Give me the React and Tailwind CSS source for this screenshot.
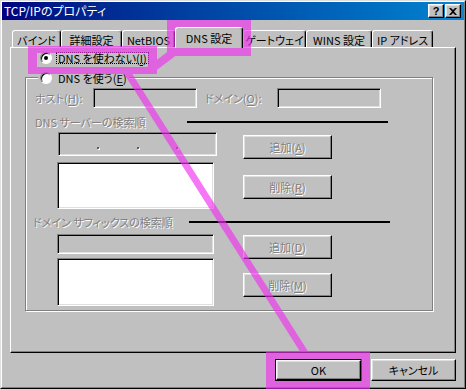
import React from 'react'

const sunken = 'border border-t-[#808080] border-l-[#808080] border-b-white border-r-white shadow-[inset_1px_1px_0_#000,inset_-1px_-1px_0_#dfdfdf]'
const raised = 'border border-t-white border-l-white border-b-black border-r-black shadow-[inset_-1px_-1px_0_#808080,inset_1px_1px_0_#dfdfdf]'
const dis = 'text-[#808080] [text-shadow:1px_1px_0_#fff]'

function U({ children }) {
  return <span className="underline underline-offset-[2px]">{children}</span>
}

function Radio({ checked }) {
  return (
    <span className="flex items-center justify-center w-[12px] h-[12px] shrink-0 rounded-full bg-white border border-t-[#808080] border-l-[#808080] border-b-white border-r-white shadow-[inset_1px_1px_0_#000]">
      {checked && <span className="w-[4px] h-[4px] rounded-full bg-black" />}
    </span>
  )
}

function Tab({ label, w, active }) {
  if (active) {
    return (
      <div className={`relative z-10 ${w} h-[21px] flex justify-center pt-[4px] leading-[12px] whitespace-nowrap bg-[#c0c0c0] border-l border-t border-r border-l-white border-t-white border-r-black rounded-t-[3px] shadow-[inset_-1px_0_0_#808080]`}>
        {label}
      </div>
    )
  }
  return (
    <div className={`${w} h-[17px] mt-[3px] flex justify-center pt-[3px] leading-[12px] whitespace-nowrap border-l border-t border-r border-l-white border-t-white border-r-black rounded-t-[3px] shadow-[inset_-1px_0_0_#808080]`}>
      {label}
    </div>
  )
}

function Btn({ children, className = '' }) {
  return (
    <div className={`w-[89px] h-[24px] flex items-center justify-center ${raised} ${dis} ${className}`}>
      {children}
    </div>
  )
}

function IpDot() {
  return (
    <div className="w-[3px] self-stretch flex justify-center items-end pb-[6px]">
      <div className="w-[2px] h-[2px] bg-[#606060] shadow-[1px_1px_0_#fff]" />
    </div>
  )
}

export default function App() {
  return (
    <div className="relative w-[466px] h-[389px] overflow-hidden bg-[#c0c0c0] text-[11px] text-black font-['Noto_Sans_CJK_JP',sans-serif] [font-feature-settings:'palt']">
      <div className="h-full border border-t-[#dfdfdf] border-l-[#dfdfdf] border-b-black border-r-black">
        <div className="h-full flex flex-col border border-t-white border-l-white border-b-[#808080] border-r-[#808080]">
          {/* title bar */}
          <div className="h-[18px] flex items-center justify-between pl-[2px] pr-[3px] bg-linear-to-r from-[#000080] to-[#1084d0]">
            <span className="text-white text-[12px] leading-none">TCP/IPのプロパティ</span>
            <div className="flex gap-[1px]">
              <div className={`w-[16px] h-[14px] flex items-center justify-center bg-[#c0c0c0] ${raised} font-bold text-[11px] leading-none font-['Liberation_Sans',sans-serif]`}>?</div>
              <div className={`w-[16px] h-[14px] flex items-center justify-center bg-[#c0c0c0] ${raised}`}>
                <svg width="8" height="7" viewBox="0 0 8 7">
                  <path d="M0 0h2l2 2 2-2h2L5 3.5 8 7H6L4 5 2 7H0l3-3.5z" fill="#000" />
                </svg>
              </div>
            </div>
          </div>

          {/* tabs */}
          <div className="mt-[7px] pl-[10px] h-[21px] flex items-start">
            <Tab w="w-[49px]" label="バインド" />
            <Tab w="w-[61px]" label="詳細設定" />
            <Tab w="w-[53px]" label="NetBIOS" />
            <Tab w="w-[68px]" label="DNS 設定" active />
            <Tab w="w-[63px]" label="ゲートウェイ" />
            <Tab w="w-[66px]" label="WINS 設定" />
            <Tab w="w-[61px]" label="IP アドレス" />
          </div>

          {/* panel */}
          <div className="-mt-[1px] ml-[8px] w-[446px] h-[306px] flex flex-col border border-t-white border-l-white border-b-black border-r-black shadow-[inset_-1px_-1px_0_#808080]">
            <div className="mt-[3px] ml-[29px] h-[13px] flex items-center">
              <Radio checked />
              <span className="ml-[4px] px-[1px] leading-[10px] whitespace-nowrap border border-dotted border-black">
                DNS を使わない(<U>I</U>)
              </span>
            </div>

            {/* group box */}
            <div className="mt-[13px] ml-[14px] w-[408px] h-[234px] flex flex-col border border-[#808080] shadow-[inset_1px_1px_0_#fff,1px_1px_0_#fff]">
              <div className="-mt-[7px] ml-[12px] w-fit h-[14px] px-[2px] flex items-center gap-[6px] bg-[#c0c0c0] leading-none whitespace-nowrap">
                <Radio />
                <span>DNS を使う(<U>E</U>)</span>
              </div>

              <div className="mt-[3px] ml-[9px] h-[20px] flex items-center leading-none whitespace-nowrap">
                <span className={`w-[58px] ${dis}`}>ホスト(<U>H</U>):</span>
                <div className={`w-[104px] h-[20px] ${sunken}`} />
                <span className={`ml-[8px] w-[72px] ${dis}`}>ドメイン(<U>O</U>):</span>
                <div className={`w-[104px] h-[20px] ${sunken}`} />
              </div>

              <div className="mt-[7px] ml-[9px] h-[14px] flex items-center leading-none whitespace-nowrap">
                <span className={`w-[152px] ${dis}`}>DNS サーバーの検索順</span>
                <div className="w-[201px] h-[2px] bg-black" />
              </div>

              <div className="mt-[3px] ml-[31px] flex">
                <div className="w-[160px] flex flex-col">
                  <div className={`ml-[1px] w-[159px] h-[24px] flex px-[1px] ${sunken}`}>
                    <div className="flex-1" />
                    <IpDot />
                    <div className="flex-1" />
                    <IpDot />
                    <div className="flex-1" />
                    <IpDot />
                    <div className="flex-1" />
                  </div>
                  <div className={`mt-[6px] w-[157px] h-[47px] bg-white ${sunken}`} />
                </div>
                <div className="ml-[26px] flex flex-col">
                  <Btn className="mt-[3px]">追加(<U>A</U>)</Btn>
                  <Btn className="mt-[16px]">削除(<U>R</U>)</Btn>
                </div>
              </div>

              <div className="mt-[6px] ml-[7px] h-[14px] flex items-center leading-none whitespace-nowrap">
                <span className={`w-[156px] ${dis}`}>ドメイン サフィックスの検索順</span>
                <div className="w-[201px] h-[2px] bg-black" />
              </div>

              <div className="mt-[5px] ml-[31px] flex">
                <div className="w-[160px] flex flex-col">
                  <div className={`w-[157px] h-[20px] ${sunken}`} />
                  <div className={`mt-[4px] w-[157px] h-[48px] bg-white ${sunken}`} />
                </div>
                <div className="ml-[26px] flex flex-col">
                  <Btn className="mt-[1px]">追加(<U>D</U>)</Btn>
                  <Btn className="mt-[14px]">削除(<U>M</U>)</Btn>
                </div>
              </div>
            </div>
          </div>

          {/* dialog buttons */}
          <div className="mt-[6px] pr-[8px] flex justify-end gap-[9px] leading-none">
            <div className="w-[87px] h-[22px] border border-black">
              <div className={`h-full flex items-center justify-center ${raised}`}>OK</div>
            </div>
            <div className={`w-[85px] h-[22px] flex items-center justify-center ${raised}`}>キャンセル</div>
          </div>
        </div>
      </div>

      {/* pink annotation */}
      <svg className="absolute left-0 top-0 pointer-events-none" width="466" height="389" viewBox="0 0 466 389">
        <g opacity="0.65" fill="#f030f0" stroke="none">
          <path fillRule="evenodd" d="M167 20H251V56H167Z M175 28V47H243V28Z" />
          <path fillRule="evenodd" d="M28 46H157V74H28Z M37 53V67H148V53Z" />
          <path fillRule="evenodd" d="M266 352H370V392H266Z M275 359V381H361V359Z" />
          <line x1="150" y1="70" x2="174" y2="52" stroke="#f030f0" strokeWidth="8" />
          <line x1="127" y1="72" x2="305" y2="353" stroke="#f030f0" strokeWidth="7" />
        </g>
      </svg>
    </div>
  )
}
